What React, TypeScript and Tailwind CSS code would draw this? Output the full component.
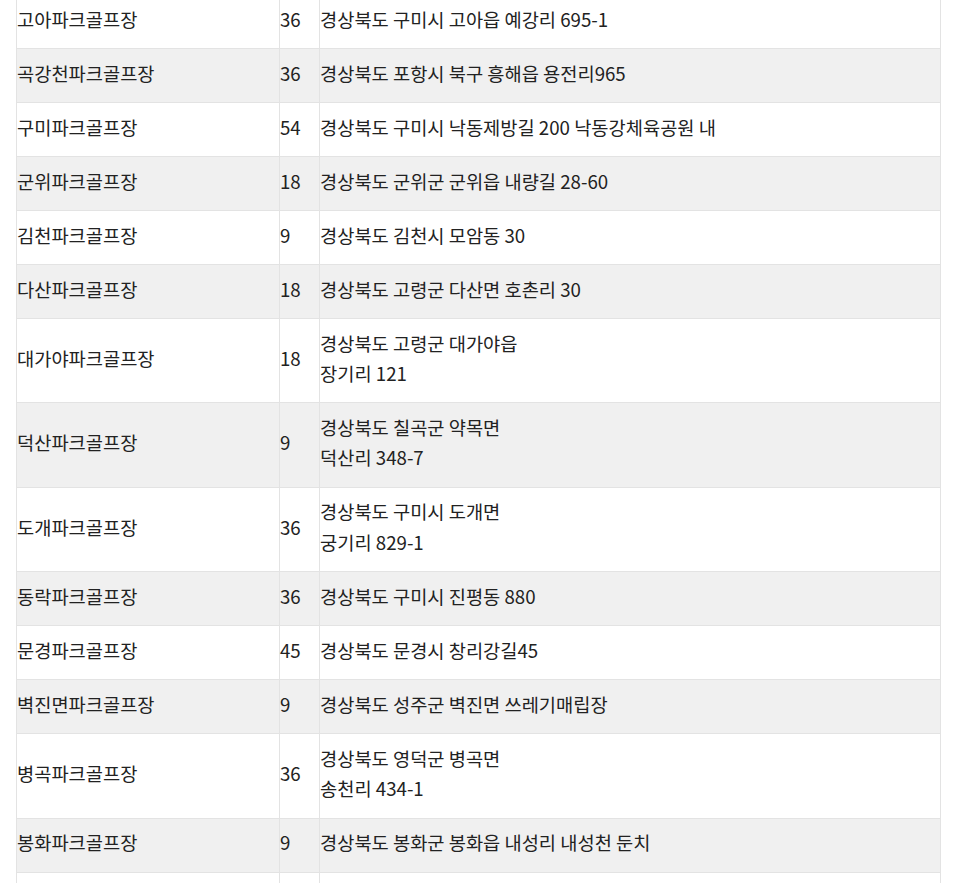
import React from "react";

const rows: [string, string, string[]][] = [
  ["고아파크골프장", "36", ["경상북도 구미시 고아읍 예강리 695-1"]],
  ["곡강천파크골프장", "36", ["경상북도 포항시 북구 흥해읍 용전리965"]],
  ["구미파크골프장", "54", ["경상북도 구미시 낙동제방길 200 낙동강체육공원 내"]],
  ["군위파크골프장", "18", ["경상북도 군위군 군위읍 내량길 28-60"]],
  ["김천파크골프장", "9", ["경상북도 김천시 모암동 30"]],
  ["다산파크골프장", "18", ["경상북도 고령군 다산면 호촌리 30"]],
  ["대가야파크골프장", "18", ["경상북도 고령군 대가야읍", "장기리 121"]],
  ["덕산파크골프장", "9", ["경상북도 칠곡군 약목면", "덕산리 348-7"]],
  ["도개파크골프장", "36", ["경상북도 구미시 도개면", "궁기리 829-1"]],
  ["동락파크골프장", "36", ["경상북도 구미시 진평동 880"]],
  ["문경파크골프장", "45", ["경상북도 문경시 창리강길45"]],
  ["벽진면파크골프장", "9", ["경상북도 성주군 벽진면 쓰레기매립장"]],
  ["병곡파크골프장", "36", ["경상북도 영덕군 병곡면", "송천리 434-1"]],
  ["봉화파크골프장", "9", ["경상북도 봉화군 봉화읍 내성리 내성천 둔치"]],
  ["", "", [""]],
];

export default function App() {
  return (
    <div
      className="w-[953px] h-[883px] overflow-hidden bg-white"
      style={{ fontFamily: '"Noto Sans CJK KR", "Noto Sans", sans-serif' }}
    >
      <table className="ml-[16px] -mt-[6px] w-[925px] table-fixed border-collapse text-[18.7px] leading-[30.5px] text-[#222222]">
        <colgroup>
          <col className="w-[263px]" />
          <col className="w-[40px]" />
          <col />
        </colgroup>
        <tbody>
          {rows.map(([name, holes, addr], i) => (
            <tr key={i} className={i % 2 === 1 ? "bg-[#f0f0f0]" : "bg-white"}>
              <td className="border border-[#e3e3e3] px-0 pt-[8.6px] pb-[13.9px] align-middle">{name}</td>
              <td className="border border-[#e3e3e3] px-0 pt-[8.6px] pb-[13.9px] align-middle">{holes}</td>
              <td className="border border-[#e3e3e3] px-0 pt-[8.6px] pb-[13.9px] align-middle">
                {addr.map((l, j) => (
                  <div key={j} className="min-h-[30.5px]">{l}</div>
                ))}
              </td>
            </tr>
          ))}
        </tbody>
      </table>
    </div>
  );
}
